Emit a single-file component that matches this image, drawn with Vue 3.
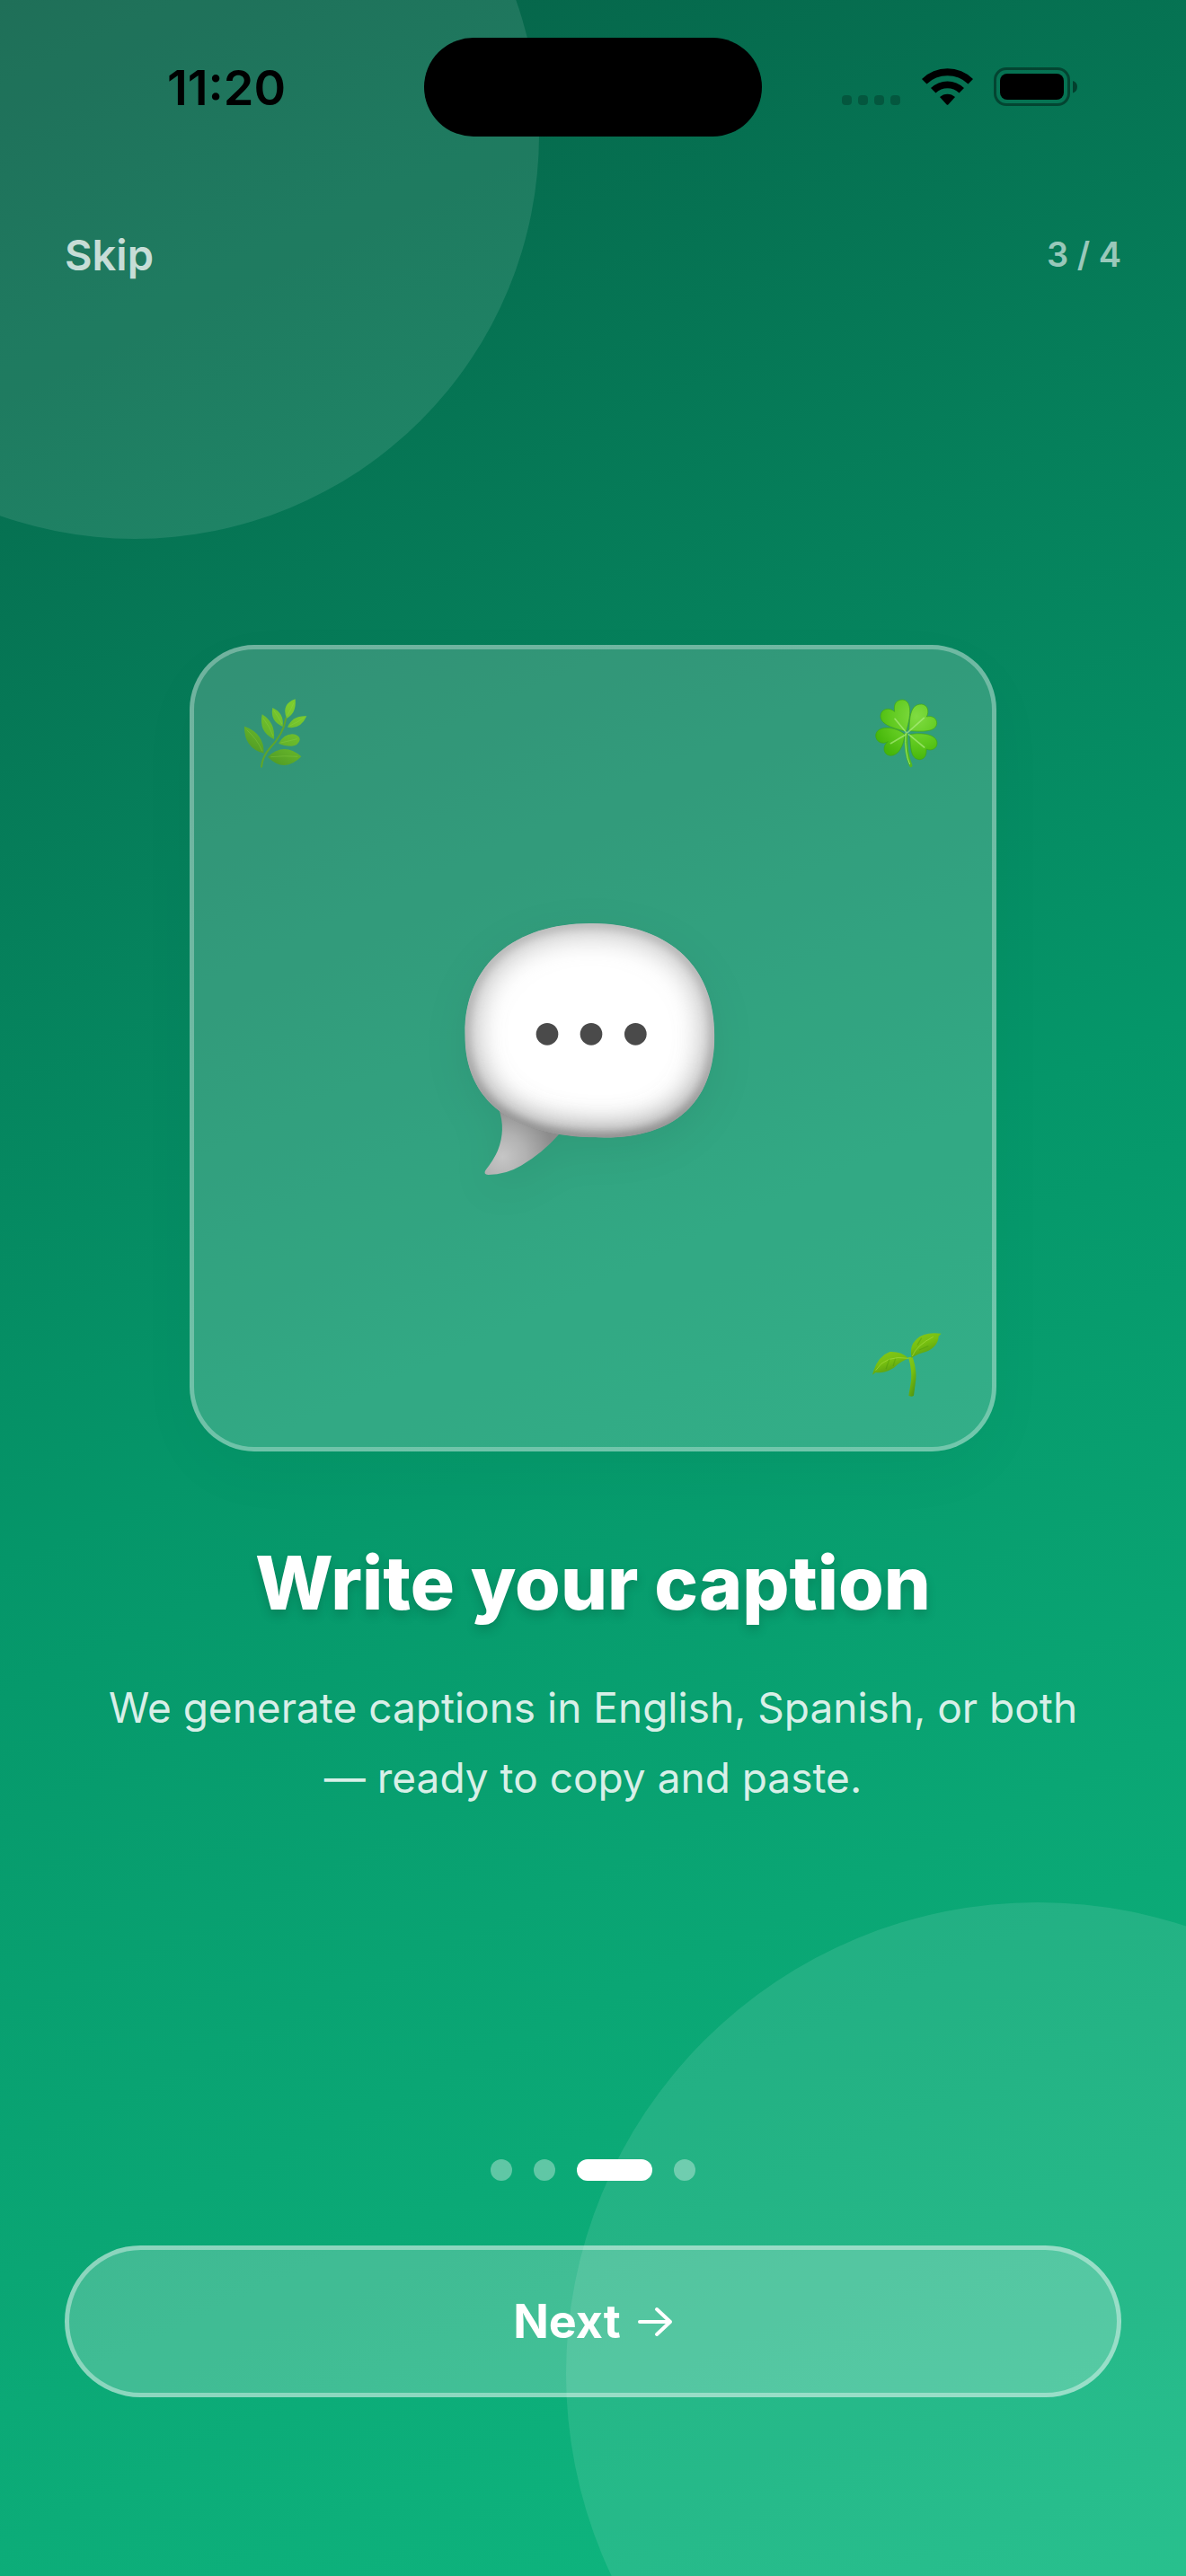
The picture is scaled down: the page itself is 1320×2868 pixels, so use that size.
<template>
  <div class="screen">
    <div class="blob blob-top"></div>
    <div class="blob blob-bottom"></div>

    <div class="status-bar">
      <span class="time">11:20</span>
      <div class="island"></div>
      <div class="status-icons">
        <svg class="signal" viewBox="0 0 66 44" aria-hidden="true">
          <rect v-for="n in 4" :key="n" :x="(n - 1) * 18" y="31" width="11" height="11" rx="4" />
        </svg>
        <svg class="wifi" viewBox="0 0 57 44" aria-hidden="true">
          <path d="M0 13 A40.5 40.5 0 0 1 57 13 L51.5 18.5 A33 33 0 0 0 5.5 18.5 Z" />
          <path d="M10 23 A26.5 26.5 0 0 1 47 23 L41.5 28.5 A18.7 18.7 0 0 0 15.500 28.5 Z" />
          <path d="M20 33 A12.5 12.5 0 0 1 37 33 L29.3 41.500 Q28.5 42.200 27.7 41.500 Z" />
        </svg>
        <svg class="battery" viewBox="0 0 93 44" aria-hidden="true">
          <rect class="battery-shell" x="1.5" y="1.5" width="82" height="40" rx="12.5" />
          <rect x="7" y="7" width="71" height="29" rx="8" />
          <path class="battery-cap" d="M88 15 Q93 16.5 93 21.5 Q93 27 88 28.5 Z" />
        </svg>
      </div>
    </div>

    <header class="header">
      <button class="skip" type="button" @click="step = steps">Skip</button>
      <span class="counter">{{ step }} / {{ steps }}</span>
    </header>

    <main class="content">
      <div class="card">
        <svg class="decor decor-tl" viewBox="210 228 240 240" aria-hidden="true">
          <defs>
            <linearGradient id="leaf" gradientUnits="userSpaceOnUse" x1="250" y1="460" x2="370" y2="250">
              <stop offset="0" stop-color="#468f22" />
              <stop offset="0.5" stop-color="#66b52a" />
              <stop offset="1" stop-color="#7ccc2e" />
            </linearGradient>
          </defs>
          <path d="M273 458 Q276 424 301 396 Q346 350 355 296" fill="none" stroke="#5ea62a" stroke-width="6" stroke-linecap="round" />
          <g fill="url(#leaf)">
            <path d="M216 323 Q282 346 281 413 Q214 395 216 323Z" />
            <path d="M294 425 Q348 374 406 424 Q350 481 294 425Z" />
            <path d="M275 283 Q320 310 315 366 Q263 343 275 283Z" />
            <path d="M330 380 Q352 343 386 350 Q402 356 401 368 Q397 386 374 389 Q348 389 330 380Z" />
            <path d="M310 261 Q350 279 344 324 Q301 306 310 261Z" />
            <path d="M360 326 Q377 286 424 289 Q403 335 360 326Z" />
            <path d="M386 232 Q390 281 357 296 Q338 249 386 232Z" />
          </g>
          <path
            d="M224 335 Q258 365 276 406 M304 425 Q350 420 394 424 M279 296 Q302 325 312 356 M337 378 Q365 372 392 365 M314 270 Q332 294 341 315 M368 321 Q395 309 414 294 M381 244 Q370 270 359 287"
            fill="none" stroke="#9bdc55" stroke-width="2" opacity="0.4" />
        </svg>

        <svg class="decor decor-tr" viewBox="210 228 240 240" aria-hidden="true">
          <defs>
            <radialGradient id="clover" gradientUnits="userSpaceOnUse" cx="360" cy="290" r="150">
              <stop offset="0" stop-color="#80dc42" />
              <stop offset="0.6" stop-color="#5fc91e" />
              <stop offset="1" stop-color="#45b60a" />
            </radialGradient>
          </defs>
          <path d="M326 350 Q322 412 341 454" fill="none" stroke="#52b81f" stroke-width="11" stroke-linecap="round" />
          <g fill="url(#clover)" stroke="#3fa512" stroke-width="2">
            <path d="M326 340 C286 331 240 318 240 289 C241 263 270 258 287 274 C282 245 296 234 313 234 C342 236 345 275 326 340Z" />
            <path d="M335 338 C338 290 339 249 377 249 C399 251 403 274 394 291 C414 286 429 297 428 314 C424 342 385 341 335 338Z" />
            <path d="M321 350 C317 390 300 421 273 421 C248 418 245 388 265 374 C245 386 225 374 224 355 C224 318 290 322 321 350Z" />
            <path d="M337 350 C379 343 428 349 429 379 C429 399 409 406 393 399 C395 423 384 434 370 434 C337 432 342 387 337 350Z" />
          </g>
          <path
            d="M327 345 L288 298 M331 343 L385 295 M325 350 L274 380 M334 350 L386 393"
            fill="none" stroke="#b5f08a" stroke-width="5" opacity="0.6" stroke-linecap="round" />
          <path d="M324 346 Q320 412 338 450" fill="none" stroke="#9be866" stroke-width="3" />
        </svg>

        <svg class="decor decor-br" viewBox="150 138 240 240" aria-hidden="true">
          <defs>
            <linearGradient id="sprout" x1="0" y1="0" x2="0.5" y2="1">
              <stop offset="0" stop-color="#85c81c" />
              <stop offset="0.5" stop-color="#77c010" />
              <stop offset="1" stop-color="#559a10" />
            </linearGradient>
          </defs>
          <path d="M273 240 L287 240 Q304 287 296 330 L291 368 Q284 374 274 368 L280 332 Q288 291 273 240Z" fill="url(#sprout)" />
          <path d="M153 299 Q168 238 211 222 Q249 220 274 244 Q247 254 225 275 Q192 296 164 291Z" fill="url(#sprout)" />
          <path d="M284 243 Q275 202 301 179 Q326 154 383 161 L374 170 Q372 206 331 222 Q302 229 284 243Z" fill="url(#sprout)" />
          <path d="M164 284 Q196 231 274 244 M286 237 Q301 200 356 172" fill="none" stroke="#b1e34e" stroke-width="2" opacity="0.8" />
          <path d="M198 280 L210 246 M222 270 L230 245 M309 216 L340 203 M303 200 L317 176" stroke="#3f8a0c" stroke-width="4" opacity="0.3" />
        </svg>

        <svg class="bubble" viewBox="108 96 864 864" role="img" aria-label="Speech bubble">
          <defs>
            <clipPath id="bubble-clip">
              <path :d="bubblePath" />
            </clipPath>
            <linearGradient id="rim" x1="0" y1="0" x2="0" y2="1">
              <stop offset="0" stop-color="#a6a6a6" />
              <stop offset="0.55" stop-color="#999" />
              <stop offset="1" stop-color="#6a6a6a" />
            </linearGradient>
            <radialGradient id="tail" gradientUnits="userSpaceOnUse" cx="238" cy="890" r="170">
              <stop offset="0" stop-color="#c6c6c6" />
              <stop offset="0.45" stop-color="#b2b2b2" />
              <stop offset="1" stop-color="#8c8c8c" />
            </radialGradient>
            <filter id="rim-wide" x="-20%" y="-20%" width="140%" height="140%">
              <feGaussianBlur stdDeviation="48" />
            </filter>
            <filter id="rim-tight" x="-20%" y="-20%" width="140%" height="140%">
              <feGaussianBlur stdDeviation="16" />
            </filter>
          </defs>
          <path d="M225 730 Q250 800 222 870 Q208 902 181 936 Q173 950 190 951 Q250 950 300 920 Q370 880 426 816 Z" fill="url(#tail)" />
          <g clip-path="url(#bubble-clip)">
            <path :d="bubblePath" fill="#fff" />
            <path :d="bubblePath" fill="none" stroke="url(#rim)" stroke-width="52" filter="url(#rim-wide)" />
            <path :d="bubblePath" fill="none" stroke="url(#rim)" stroke-width="22" filter="url(#rim-tight)" />
          </g>
          <g fill="#4a4a4a">
            <circle cx="387" cy="481" r="37" />
            <circle cx="534" cy="481" r="37" />
            <circle cx="682" cy="481" r="37" />
          </g>
        </svg>
      </div>

      <h1 class="title">Write your caption</h1>
      <p class="description">We generate captions in English, Spanish, or both — ready to copy and paste.</p>
    </main>

    <footer class="footer">
      <div class="dots">
        <span v-for="n in steps" :key="n" class="dot" :class="{ active: n === step }"></span>
      </div>
      <button class="next" type="button" @click="next">
        <span>Next</span>
        <svg class="arrow" viewBox="0 0 40 36" aria-hidden="true">
          <path d="M3 18 H37 M22 4 L37 18 L22 32" />
        </svg>
      </button>
    </footer>
  </div>
</template>

<script setup>
import { ref } from 'vue';

const steps = 4;
const step = ref(3);

const bubblePath =
  'M530 111 C770 109 946 235 946 485 C946 715 805 827 580 827 C520 827 470 823 426 816 C350 805 280 775 232 742 C150 680 112 595 112 480 C112 245 280 112 530 111Z';

function next() {
  if (step.value < steps) {
    step.value++;
  }
}
</script>

<style>
body {
  margin: 0;
}
</style>

<style scoped>
.screen {
  position: relative;
  display: flex;
  flex-direction: column;
  min-height: 100vh;
  overflow: hidden;
  background: linear-gradient(155deg, #065f46 0%, #059669 50%, #10b981 100%);
  color: #fff;
  font-family: Inter, "Liberation Sans", sans-serif;
}
.blob {
  position: absolute;
  border-radius: 50%;
  background: rgba(255, 255, 255, 0.1);
}
.blob-top {
  top: -300px;
  left: -300px;
  width: 900px;
  height: 900px;
}
.blob-bottom {
  right: -360px;
  bottom: -300px;
  width: 1050px;
  height: 1050px;
}
.status-bar,
.header,
.content,
.footer {
  position: relative;
}
.status-bar {
  display: grid;
  grid-template-columns: 1fr 376px 1fr;
  align-items: center;
  padding: 42px 32px 34px;
  color: #000;
}
.time {
  text-align: center;
  font-size: 54px;
  font-weight: 600;
}
.island {
  height: 110px;
  border-radius: 55px;
  background: #000;
}
.status-icons {
  display: flex;
  justify-content: center;
  gap: 23px;
}
.status-icons svg {
  height: 44px;
}
.signal {
  width: 66px;
  opacity: 0.22;
}
.wifi {
  width: 57px;
}
.battery {
  width: 93px;
}
.battery-shell {
  fill: none;
  stroke: #000;
  stroke-width: 3;
  opacity: 0.4;
}
.battery-cap {
  opacity: 0.45;
}
.header {
  display: flex;
  align-items: center;
  justify-content: space-between;
  height: 98px;
  padding: 48px 72px 0;
}
.skip {
  padding: 0;
  border: none;
  background: none;
  color: rgba(255, 255, 255, 0.75);
  font: inherit;
  font-size: 47px;
  font-weight: 600;
  cursor: pointer;
}
.counter {
  color: rgba(255, 255, 255, 0.6);
  font-size: 38px;
  font-weight: 600;
}
.content {
  flex: 1;
  display: flex;
  flex-direction: column;
  align-items: center;
  justify-content: center;
}
.card {
  position: relative;
  display: flex;
  align-items: center;
  justify-content: center;
  box-sizing: border-box;
  width: 68%;
  aspect-ratio: 1;
  border: 5px solid rgba(255, 255, 255, 0.3);
  border-radius: 72px;
  background: rgba(255, 255, 255, 0.18);
  box-shadow: 0 24px 72px rgba(0, 0, 0, 0.03);
}
.decor {
  position: absolute;
  width: 80px;
  height: 80px;
}
.decor-tl {
  top: 54px;
  left: 54px;
}
.decor-tr {
  top: 54px;
  right: 54px;
}
.decor-br {
  right: 54px;
  bottom: 54px;
}
.bubble {
  width: 288px;
  height: 288px;
  filter: drop-shadow(0 12px 24px rgba(0, 0, 0, 0.06));
}
.title {
  margin: 96px 0 48px;
  font-size: 82px;
  font-weight: 800;
  line-height: 102px;
  text-align: center;
  text-shadow: 0 6px 12px rgba(0, 0, 0, 0.15);
}
.description {
  margin: 0;
  padding: 0 108px;
  color: rgba(255, 255, 255, 0.85);
  font-size: 46px;
  line-height: 78px;
  text-align: center;
}
.footer {
  display: flex;
  flex-direction: column;
  gap: 72px;
  padding: 0 72px 199px;
}
.dots {
  display: flex;
  justify-content: center;
  gap: 24px;
}
.dot {
  width: 24px;
  height: 24px;
  border-radius: 12px;
  background: rgba(255, 255, 255, 0.35);
}
.dot.active {
  width: 84px;
  background: #fff;
}
.next {
  display: flex;
  align-items: center;
  justify-content: center;
  gap: 18px;
  height: 169px;
  border: 5px solid rgba(255, 255, 255, 0.4);
  border-radius: 85px;
  background: rgba(255, 255, 255, 0.22);
  color: #fff;
  font: inherit;
  font-size: 52px;
  font-weight: 700;
  cursor: pointer;
}
.arrow {
  width: 40px;
  height: 36px;
  fill: none;
  stroke: #fff;
  stroke-width: 4;
  stroke-linecap: round;
  stroke-linejoin: round;
}
</style>
